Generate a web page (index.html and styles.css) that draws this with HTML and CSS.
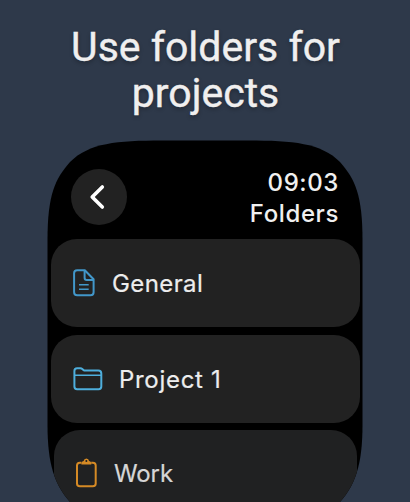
FILE: index.html
```
<!DOCTYPE html>
<html lang="en">
<head>
<meta charset="utf-8">
<title>Folders</title>
<link rel="stylesheet" href="styles.css">
</head>
<body>
<h1 class="headline">Use folders for<br>projects</h1>
<main class="watch">
  <header class="topbar">
    <div class="back">
      <svg width="56" height="56" viewBox="0 0 56 56"><path d="M31.3 18 21.2 28 31.3 38"/></svg>
    </div>
    <div class="status"><div class="time">09:03</div><div class="title">Folders</div></div>
  </header>
  <section class="list">
    <div class="row general">
      <svg class="icon" width="22" height="28" viewBox="0 0 22 28"><path d="M11.8 1.2H4.2Q1.1 1.2 1.1 4.3V23.2Q1.1 26.3 4.2 26.3H17.5Q20.6 26.3 20.6 23.2V10.2Z"/><path d="M11.6 1.8V8.7Q11.6 10.9 13.8 10.9H20.2"/><path class="thin" d="M6 15.7H15.7M6 20.3H15.7"/></svg>
      <span class="label">General</span>
    </div>
    <div class="row project">
      <svg class="icon" width="30" height="24" viewBox="0 0 30 24"><path d="M1.4 19.5V4Q1.4 1.3 4.1 1.3H7.2Q8.6 1.3 9.6 2.2L10.4 2.9Q11.2 3.6 12.5 3.6H25.3Q28.3 3.6 28.3 6.6V19.5Q28.3 22.2 25.6 22.2H4.1Q1.4 22.2 1.4 19.5Z"/><path class="thin" d="M2 8.3H28"/></svg>
      <span class="label">Project 1</span>
    </div>
    <div class="row work">
      <svg class="icon" width="21" height="30" viewBox="0 0 21 30"><path d="M5.5 4.7H3.8Q1 4.7 1 7.5V25.4Q1 28.2 3.8 28.2H16.9Q19.7 28.2 19.7 25.4V7.5Q19.7 4.7 16.9 4.7H15.2"/><path class="clip" fill-rule="evenodd" d="M5.4 5.3Q5.4 3 7.6 2.9Q8 .4 10.35 .4T13.1 2.9Q15.3 3 15.3 5.3V6.4H5.4ZM10.35 2.1A1 1 0 1 0 10.36 4.1A1 1 0 1 0 10.35 2.1Z"/></svg>
      <span class="label">Work</span>
    </div>
  </section>
</main>
</body>
</html>
```
FILE: styles.css
```
* { box-sizing: border-box; }
html, body { height: 100%; }
body {
  margin: 0;
  overflow: hidden;
  background: #2e394a;
  font-family: Inter, "Liberation Sans", sans-serif;
}
.headline {
  margin: 0;
  height: 140px;
  padding: 24px 0 0 1px;
  text-align: center;
  font: 400 41px/46px Roboto, sans-serif;
  color: #f0efef;
  text-shadow: 0 2px 4px rgba(0, 0, 0, .3);
  -webkit-text-stroke: .4px #f0efef;
}
.watch {
  width: 316px;
  height: 362px;
  margin-left: 47px;
  background: #000;
  overflow: hidden;
  clip-path: path("M.5 100C.5 55 8 39 23 22C42 3 70 .5 115 .5H201C246 .5 274 3 293 22C308 39 315.5 55 315.5 100V285C315.5 325 308 345 293 362H23C8 345 .5 325 .5 285Z");
}
.topbar {
  height: 99px;
  display: flex;
  justify-content: space-between;
  padding: 29px 24px 0 24px;
}
.back {
  width: 56px;
  height: 56px;
  border-radius: 50%;
  background: #222;
}
.back svg {
  display: block;
  fill: none;
  stroke: #fff;
  stroke-width: 3.6;
  stroke-linecap: round;
  stroke-linejoin: round;
}
.status {
  margin-top: -2px;
  text-align: right;
  font-size: 24px;
  font-weight: 500;
  line-height: 31px;
  letter-spacing: .6px;
  color: #f0f0f0;
}
.list {
  display: flex;
  flex-direction: column;
  gap: 8px;
  padding: 0 3.5px;
}
.row {
  height: 88px;
  flex: none;
  display: flex;
  align-items: center;
  border-radius: 26px;
  background: #222;
  padding-left: 22.5px;
  color: #ededed;
  font-size: 24px;
  letter-spacing: .4px;
  -webkit-text-stroke: .2px currentColor;
}
.icon {
  flex: none;
  fill: none;
  stroke: currentColor;
  stroke-width: 2;
  stroke-linejoin: round;
}
.thin { stroke-width: 1.5; }
.general .icon { color: #4297c9; margin-right: 17px; }
.project .icon { color: #4eaedc; margin-right: 16px; }
.project .label { letter-spacing: .7px; }
.work {
  margin: -1px 3px 0;
  padding-bottom: 2px;
  background: #202122;
}
.work .icon { color: #d58a25; margin-right: 17px; }
.work .clip { fill: currentColor; stroke: none; }
.work .label { color: #d6d6d6; letter-spacing: -.1px; }
```
